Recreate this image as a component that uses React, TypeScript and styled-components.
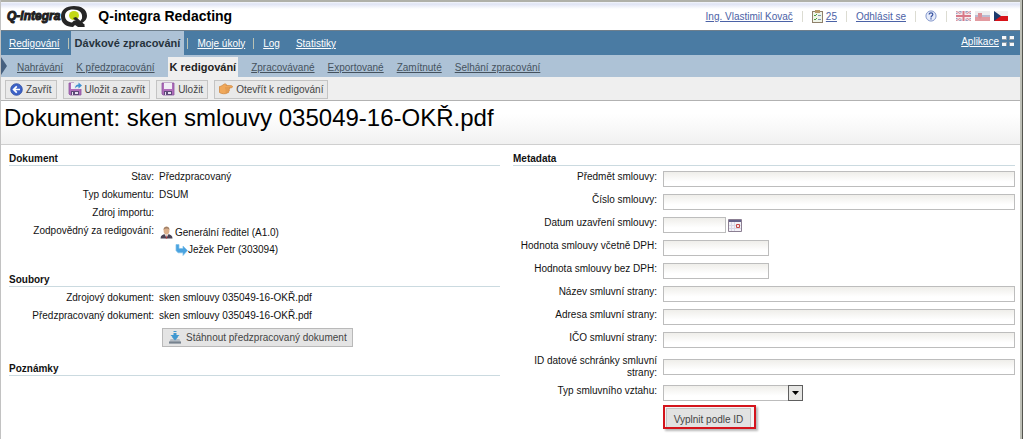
import React from "react";
import styled, { createGlobalStyle } from "styled-components";

const GlobalStyle = createGlobalStyle`
  *, *::before, *::after { box-sizing: border-box; }
  html { height: 100%; }
  body, #root { height: 100%; margin: 0; }
  body {
    background: #ffffff;
    color: #111111;
    font: 10px/13px "Liberation Sans", Arial, sans-serif;
  }
  button, input, select { font: inherit; }
`;

const Frame = styled.div`
  min-height: 100%;
  border-left: 1px solid #c2c2c2;
  border-right: 1px solid #55554f;
  box-shadow: inset -2px 0 0 #bfc1b8;
  padding-right: 2px;
`;

const Header = styled.header`
  height: 31px;
  display: flex;
  align-items: center;
  padding: 0 12px 0 6px;
  border-top: 2px solid #b0b1a9;
  border-bottom: 1px solid #6f7f8c;
  background: linear-gradient(#f4f6fc 0, #dfe4f4 2px, #ffffff 7px);
`;

const Brand = styled.div`
  display: flex;
  align-items: center;
  color: #1f1f1f;
`;

const BrandName = styled.span`
  font: italic bold 12px/20px "Liberation Sans", Arial, sans-serif;
  -webkit-text-stroke: 1px #1f1f1f;
`;

const Product = styled.h2`
  margin: 0 auto 0 10px;
  font-size: 14px;
  line-height: 20px;
  color: #000000;
`;

const Account = styled.div`
  display: flex;
  align-items: center;
  gap: 9px;
`;

const AccountLink = styled.a`
  display: flex;
  align-items: center;
  gap: 3px;
  color: #4b62a6;
`;

const Divider = styled.span`
  width: 1px;
  height: 11px;
  background: #dcdcd2;
`;

const Languages = styled.div`
  display: flex;
  gap: 4px;
`;

const IconButton = styled.button`
  display: flex;
  padding: 0;
  border: 0;
  background: none;
`;

const MainNav = styled.nav`
  height: 24px;
  display: flex;
  align-items: stretch;
  padding-right: 5px;
  background: #4a7ba3;
`;

const NavLink = styled.a`
  display: flex;
  align-items: center;
  padding: 0 8px;
  color: #ffffff;
`;

const NavDivider = styled.span`
  width: 1px;
  height: 11px;
  margin-right: 1px;
  align-self: center;
  background: #b9c2b4;
`;

const ActiveTab = styled.a`
  display: flex;
  align-items: center;
  margin: 0 3px 0 1px;
  padding: 0 4px;
  background: #adc2d6;
  color: #26333d;
  font-size: 11px;
  font-weight: bold;
  text-decoration: none;
`;

const Apps = styled.a`
  display: flex;
  align-items: center;
  gap: 2px;
  margin: 0 0 4px auto;
  color: #ffffff;
`;

const SubNav = styled.nav`
  height: 22px;
  display: flex;
  align-items: stretch;
  gap: 13px;
  background: #adc2d6;
`;

const SubMarker = styled.svg`
  align-self: center;
  margin-right: -3px;
`;

const SubLink = styled.a`
  display: flex;
  align-items: center;
  padding-top: 3px;
  color: #45525e;
`;

const SubActive = styled(SubLink)`
  margin-top: 2px;
  padding: 0 2px;
  background: #efefef;
  color: #1d1d1d;
  font-size: 11px;
  font-weight: bold;
  text-decoration: none;
`;

const Toolbar = styled.div`
  height: 24px;
  display: flex;
  align-items: center;
  gap: 6px;
  padding: 1px 4px 0;
  background: #efefef;
  border-bottom: 1px solid #b2b2b2;
`;

const Button = styled.button`
  display: inline-flex;
  align-items: center;
  gap: 3px;
  height: 19px;
  padding: 0 4px;
  border: 1px solid #c4c4c4;
  background: #e9e9e9;
  color: #444444;
  white-space: nowrap;
`;

const TitleBar = styled.div`
  height: 44px;
  padding: 2px 3px 0;
  border-bottom: 1px solid #cfcfcf;
  background: linear-gradient(#ffffff 30%, #f1f1f1);
`;

const Title = styled.h1`
  margin: 0;
  font-size: 24px;
  font-weight: normal;
  line-height: 30px;
  color: #000000;
`;

const Content = styled.main`
  display: grid;
  grid-template-columns: 491fr 502fr;
  column-gap: 13px;
  padding: 8px 5px 0 8px;
`;

const Section = styled.section<{ $last?: boolean }>`
  padding-bottom: ${(p) => (p.$last ? 0 : 16)}px;
`;

const SectionTitle = styled.h3`
  margin: 0 0 4px;
  font-size: 10px;
  line-height: 12px;
  border-bottom: 1px solid #cbdae0;
`;

const Facts = styled.dl`
  display: grid;
  grid-template-columns: 145px 1fr;
  column-gap: 5px;
  row-gap: 5px;
  margin: 0;

  dt { text-align: right; }
  dd { margin: 0; }
`;

const Assignee = styled.div<{ $nested?: boolean }>`
  display: flex;
  align-items: center;
  gap: ${(p) => (p.$nested ? 0 : 2)}px;
  height: 17px;
  padding-left: ${(p) => (p.$nested ? 16 : 1)}px;
`;

const Download = styled(Button)`
  margin: 6px 0 0 153px;
  padding: 0 5px;
  gap: 4px;
  border-color: #b9b9b9;
  background: #e4e4e4;
`;

const Form = styled.form`
  display: grid;
  gap: 6px;
  padding-top: 1px;
`;

const Field = styled.div<{ $center?: boolean }>`
  display: grid;
  grid-template-columns: 144px 1fr;
  column-gap: 6px;
  min-height: 17px;
  line-height: 12px;
  align-items: ${(p) => (p.$center ? "center" : "start")};

  label { text-align: right; }
`;

const Control = styled.div`
  display: flex;
  align-items: center;
  gap: 2px;
`;

const TextInput = styled.input<{ $width?: string }>`
  width: ${(p) => p.$width ?? "100%"};
  height: 16px;
  padding: 0 3px;
  border: 1px solid #bdbdbd;
  border-radius: 0;
  background: linear-gradient(#efeeea, #ffffff 70%);
`;

const SelectBox = styled.div`
  position: relative;
  width: 140px;
  height: 16px;
`;

const Select = styled.select`
  display: block;
  appearance: none;
  width: 100%;
  height: 16px;
  padding: 0 18px 0 3px;
  border: 1px solid #bdbdbd;
  border-radius: 0;
  background: linear-gradient(#efeeea, #ffffff 70%);
`;

const SelectArrow = styled.span`
  position: absolute;
  top: 0;
  right: 0;
  display: grid;
  place-items: center;
  width: 15px;
  height: 16px;
  border: 1px solid #5e5e5e;
  background: #e6e6e4;
  pointer-events: none;
`;

const Highlight = styled.div`
  width: 93px;
  height: 24px;
  margin-left: 150px;
  margin-top: -3px;
  border: 2px solid #d4141c;
  background: #f3f3f3;
  box-shadow: 2px 2px 2px #b8b8b8;

  button {
    width: 85px;
    height: 19px;
    margin: 1px 0 0 1px;
    padding: 2px 0 0;
    justify-content: center;
    border-bottom: 0;
    background: #e2e2e2;
  }
`;

const LogoMark = () => (
  <svg width="28" height="23" viewBox="0 0 28 23" aria-hidden="true">
    <path d="M14 1C6 1 1 5 1 11.500S6 22 13 22l2-2 3 2 7 0-3-4c3-2 5-4 5-7C27 4 21 1 14 1Z" fill="#262626" />
    <path d="M13 4.500C8 4.500 5 7 5 11c0 3.500 3 6 7 6.500l2-2 6 1 2-3c1-6-3-9-9-9Z" fill="#fff" />
    <ellipse cx="14" cy="10.500" rx="5" ry="4.500" fill="#c3d815" />
    <path d="m13 13 3-1 9 8-2 2h-2Z" fill="#262626" />
  </svg>
);

const TaskIcon = () => (
  <svg width="11" height="13" viewBox="0 0 11 13" aria-hidden="true">
    <rect x=".5" y="1.500" width="10" height="11" fill="#eef4e8" stroke="#8f806a" />
    <path d="M3 0h5v3H3z" fill="#b79a6a" />
    <path d="m2 5 1 1 2-2M2 9l1 1 2-2" fill="none" stroke="#4c9c3c" />
    <path d="M6 5.500h3M6 9.500h3" stroke="#7c93b0" />
  </svg>
);

const HelpIcon = () => (
  <svg width="12" height="12" viewBox="0 0 13 13" aria-hidden="true">
    <circle cx="6.500" cy="6.500" r="5.500" fill="#e6ecfa" stroke="#7b8fc8" />
    <path d="M4.500 5c0-2.500 4-2.500 4 0 0 1.200-2 1.300-2 3M6.500 9v1.300" fill="none" stroke="#35509f" strokeWidth="1.300" />
  </svg>
);

const FlagUk = () => (
  <svg width="15" height="10" viewBox="0 0 15 10" aria-hidden="true">
    <path d="M0 0h15v10H0z" fill="#9a9fc0" />
    <path d="m0 0 15 10M15 0 0 10" stroke="#f0e4e8" strokeWidth="2.500" />
    <path d="m0 0 15 10M15 0 0 10" stroke="#d88c98" />
    <path d="M7.500 0v10M0 5h15" stroke="#f6ecee" strokeWidth="4" />
    <path d="M7.500 0v10M0 5h15" stroke="#d87888" strokeWidth="2" />
  </svg>
);

const FlagSk = () => (
  <svg width="15" height="10" viewBox="0 0 15 10" aria-hidden="true">
    <path d="M0 0h15v4H0z" fill="#ededee" />
    <path d="M0 4h15v2H0z" fill="#b9bdd2" />
    <path d="M0 6h15v4H0z" fill="#e29aa0" />
    <path d="M3 2h4v4L5 8 3 6z" fill="#dc8f98" />
  </svg>
);

const FlagCz = () => (
  <svg width="14" height="10" viewBox="0 0 14 10" aria-hidden="true">
    <path d="M0 0h14v5H0z" fill="#f1f1f1" />
    <path d="M0 5h14v5H0z" fill="#d81218" />
    <path d="m0 0 7 5-7 5z" fill="#1c3a6c" />
  </svg>
);

const AppsIcon = () => (
  <svg width="14" height="11" viewBox="0 0 14 11" aria-hidden="true">
    <path d="M1 0h5v4H1zM8 0h5v4H8zM1 6h5v4H1zM8 6h5v4H8z" fill="#8d9ba6" />
    <path d="M1 0h4v3H1zM9 0h4v3H9zM1 7h4v3H1zM9 7h4v3H9z" fill="#f6f8fa" />
  </svg>
);

const BackIcon = () => (
  <svg width="13" height="13" viewBox="0 0 13 13" aria-hidden="true">
    <circle cx="6.500" cy="6.500" r="5.800" fill="#3d62c8" stroke="#2b4aa0" strokeWidth=".8" />
    <path d="M10 6.500H4M6.800 3.300 3.600 6.500l3.200 3.200" fill="none" stroke="#fff" strokeWidth="1.700" />
  </svg>
);

const SaveIcon = ({ exit }: { exit?: boolean }) => (
  <svg width="14" height="14" viewBox="0 0 14 14" aria-hidden="true">
    <path d="M1 1h12v12H2l-1-1z" fill="#b06cba" stroke="#8a54a0" strokeWidth=".8" />
    <path d="M3 1h8v6H3z" fill="#f1eef6" />
    <path d="M3 9h8v4H3z" fill="#5d4a78" />
    <path d="M4 10h1v3H4zM7 10h3v2H7z" fill="#e8e0f0" />
    {exit && (
      <>
        <path d="M6 0h8v7H6z" fill="#e9e9ee" />
        <path d="M7 6.500C7 4 8.500 2.500 10.500 2.500V.5L14 3.500l-3.500 3v-2C9 4.500 8 5 7 6.500Z" fill="#3f8fd0" />
      </>
    )}
  </svg>
);

const HandIcon = () => (
  <svg width="14" height="12" viewBox="0 0 14 12" aria-hidden="true">
    <path d="M.5 3.500c2 0 3-1.500 5-2.500 1.500-.4 2.500.5 1.500 1.500l5.500.2c1.300.2 1.300 1.800 0 2H10c1 .3 1 1.500 0 1.800.8.5.5 1.500-.4 1.700.5.800 0 1.600-1 1.600-2 1.500-6.100 1.100-8.100-.3Z" fill="#f0a85a" stroke="#d08a44" strokeWidth=".8" />
    <path d="M6 5h4M6.500 7H10M6.500 9h3" stroke="#c98440" strokeWidth=".6" />
  </svg>
);

const PersonIcon = () => (
  <svg width="13" height="13" viewBox="0 0 13 13" aria-hidden="true">
    <path d="M.5 12.500c0-3 2-4.500 6-4.500s6 1.500 6 4.500z" fill="#4b4456" />
    <path d="m4.500 8 2 4 2-4z" fill="#f1ece8" />
    <path d="m6.500 9 .8 3.500H5.700z" fill="#b53a3a" />
    <ellipse cx="6.500" cy="4.500" rx="2.900" ry="3.900" fill="#dcb08c" />
    <path d="M3.500 4C3.300-.5 9.700-.5 9.500 4 8.500 2 5 2 3.500 4Z" fill="#a08068" />
  </svg>
);

const ReplyIcon = () => (
  <svg width="13" height="12" viewBox="0 0 13 12" aria-hidden="true">
    <path d="M1 .5h3V4.500h4V2l4.500 4.500L8 11.500V8.800H3L1 6.500z" fill="#4aa3e0" stroke="#7fc0ea" strokeWidth=".7" />
  </svg>
);

const DownloadIcon = () => (
  <svg width="14" height="13" viewBox="0 0 14 13" aria-hidden="true">
    <path d="M5.500 0h3v1h-3zM5.500 2h3v2h3L7 8.500 2.500 4h3z" fill="#3f97d0" />
    <path d="M2.500 8h9l1.500 4.500H1z" fill="#b4bcc4" />
    <path d="M1 11.500h12" stroke="#76828e" strokeWidth="2" />
    <path d="m4 6 3 3.500L10 6z" fill="#3f97d0" />
  </svg>
);

const CalendarIcon = () => (
  <svg width="14" height="13" viewBox="0 0 14 13" aria-hidden="true">
    <path d="M.5.5h13v12H.5z" fill="#f3f1f7" stroke="#8b7f92" />
    <path d="M1 1h12v2H1z" fill="#64618a" />
    <path d="M3.500 3v9M6.500 3v9M1 6.500h12M1 9.500h12" stroke="#d8d8e8" />
    <path d="M8.500 5.500h3v3h-3z" fill="#f7e3e3" stroke="#c24a4a" />
  </svg>
);

type FieldDef = { id: string; label: string; width?: string; date?: boolean; center?: boolean };

const fields: FieldDef[] = [
  { id: "subject", label: "Předmět smlouvy:" },
  { id: "number", label: "Číslo smlouvy:" },
  { id: "date", label: "Datum uzavření smlouvy:", width: "63px", date: true },
  { id: "gross", label: "Hodnota smlouvy včetně DPH:", width: "106px" },
  { id: "net", label: "Hodnota smlouvy bez DPH:", width: "106px" },
  { id: "party", label: "Název smluvní strany:" },
  { id: "address", label: "Adresa smluvní strany:" },
  { id: "ico", label: "IČO smluvní strany:" },
  { id: "box", label: "ID datové schránky smluvní strany:", center: true },
];

const subLinks = ["Zpracovávané", "Exportované", "Zamítnuté", "Selhání zpracování"];

export default function App() {
  return (
    <Frame>
      <GlobalStyle />
      <Header>
        <Brand>
          <BrandName>Q-integra</BrandName>
          <LogoMark />
        </Brand>
        <Product>Q-integra Redacting</Product>
        <Account>
          <AccountLink href="#user">Ing. Vlastimil Kovač</AccountLink>
          <Divider />
          <AccountLink href="#tasks"><TaskIcon />25</AccountLink>
          <Divider />
          <AccountLink href="#logout">Odhlásit se</AccountLink>
          <Divider />
          <IconButton aria-label="Nápověda"><HelpIcon /></IconButton>
          <Divider />
          <Languages>
            <IconButton aria-label="English"><FlagUk /></IconButton>
            <IconButton aria-label="Slovenčina"><FlagSk /></IconButton>
            <IconButton aria-label="Čeština"><FlagCz /></IconButton>
          </Languages>
        </Account>
      </Header>

      <MainNav>
        <NavLink href="#redact">Redigování</NavLink>
        <NavDivider />
        <ActiveTab href="#batch">Dávkové zpracování</ActiveTab>
        <NavDivider />
        <NavLink href="#my">Moje úkoly</NavLink>
        <NavDivider />
        <NavLink href="#log">Log</NavLink>
        <NavLink href="#stats">Statistiky</NavLink>
        <Apps href="#apps">Aplikace<AppsIcon /></Apps>
      </MainNav>

      <SubNav>
        <SubMarker width="6" height="18" viewBox="0 0 6 18" aria-hidden="true">
          <path d="M0 0v18l6-9z" fill="#46607f" />
        </SubMarker>
        <SubLink href="#upload">Nahrávání</SubLink>
        <SubLink href="#pre">K předzpracování</SubLink>
        <SubActive href="#to-redact">K redigování</SubActive>
        {subLinks.map((text) => <SubLink href="#list" key={text}>{text}</SubLink>)}
      </SubNav>

      <Toolbar>
        <Button><BackIcon />Zavřít</Button>
        <Button><SaveIcon exit />Uložit a zavřít</Button>
        <Button><SaveIcon />Uložit</Button>
        <Button><HandIcon />Otevřít k redigování</Button>
      </Toolbar>

      <TitleBar>
        <Title>Dokument: sken smlouvy 035049-16-OKŘ.pdf</Title>
      </TitleBar>

      <Content>
        <div>
          <Section>
            <SectionTitle>Dokument</SectionTitle>
            <Facts>
              <dt>Stav:</dt>
              <dd>Předzpracovaný</dd>
              <dt>Typ dokumentu:</dt>
              <dd>DSUM</dd>
              <dt>Zdroj importu:</dt>
              <dd />
              <dt>Zodpovědný za redigování:</dt>
              <dd>
                <Assignee><PersonIcon />Generální ředitel (A1.0)</Assignee>
                <Assignee $nested><ReplyIcon />Ježek Petr (303094)</Assignee>
              </dd>
            </Facts>
          </Section>
          <Section>
            <SectionTitle>Soubory</SectionTitle>
            <Facts>
              <dt>Zdrojový dokument:</dt>
              <dd>sken smlouvy 035049-16-OKŘ.pdf</dd>
              <dt>Předzpracovaný dokument:</dt>
              <dd>sken smlouvy 035049-16-OKŘ.pdf</dd>
            </Facts>
            <Download><DownloadIcon />Stáhnout předzpracovaný dokument</Download>
          </Section>
          <Section $last>
            <SectionTitle>Poznámky</SectionTitle>
          </Section>
        </div>

        <Section $last>
          <SectionTitle>Metadata</SectionTitle>
          <Form>
            {fields.map((f) => (
              <Field key={f.id} $center={f.center}>
                <label htmlFor={f.id}>{f.label}</label>
                <Control>
                  <TextInput id={f.id} type="text" $width={f.width} />
                  {f.date && <IconButton type="button" aria-label="Kalendář"><CalendarIcon /></IconButton>}
                </Control>
              </Field>
            ))}
            <Field>
              <label htmlFor="relation">Typ smluvního vztahu:</label>
              <SelectBox>
                <Select id="relation" />
                <SelectArrow>
                  <svg width="7" height="4" viewBox="0 0 7 4" aria-hidden="true">
                    <path d="M0 0h7L3.500 4z" fill="#000" />
                  </svg>
                </SelectArrow>
              </SelectBox>
            </Field>
            <Highlight>
              <Button type="button">Vyplnit podle ID</Button>
            </Highlight>
          </Form>
        </Section>
      </Content>
    </Frame>
  );
}
